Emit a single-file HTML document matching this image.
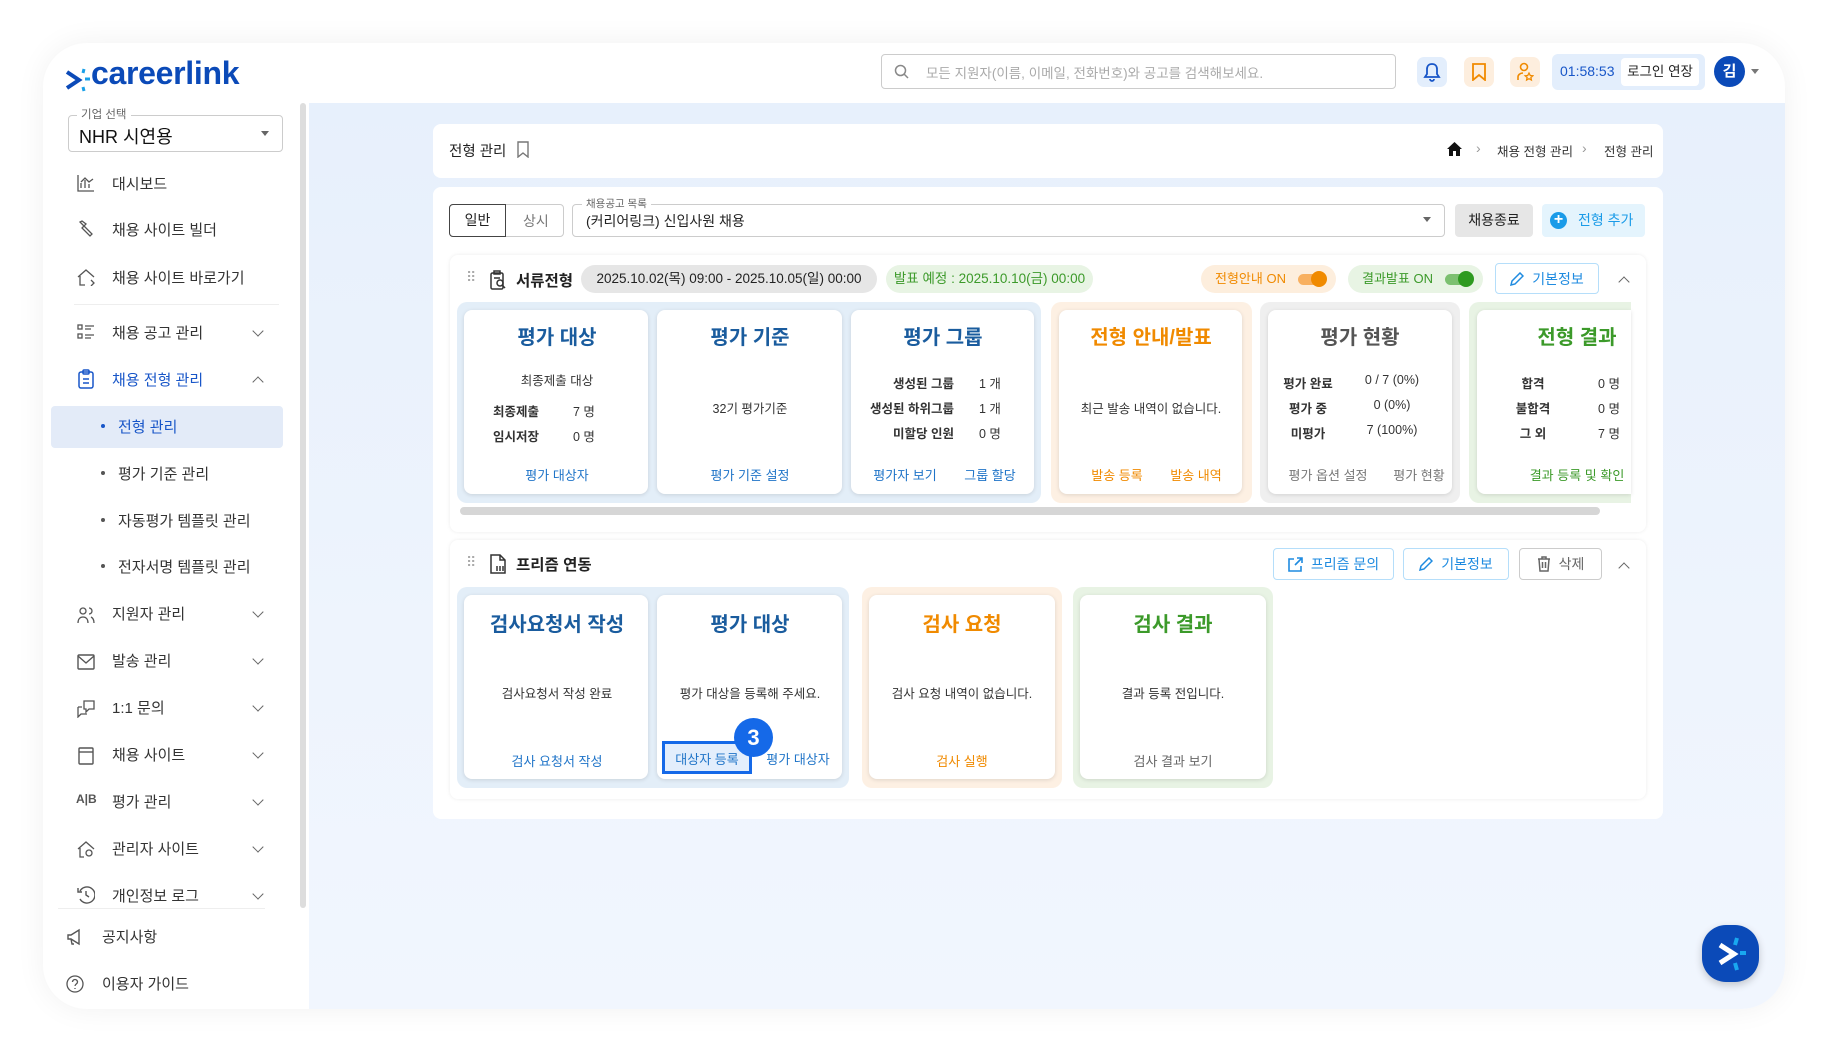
<!DOCTYPE html>
<html><head><meta charset="utf-8"><style>
*{box-sizing:border-box;margin:0;padding:0}
body{width:1825px;height:1048px;background:#fff;font-family:"Liberation Sans","Noto Sans CJK KR",sans-serif;position:relative;overflow:hidden;color:#222}
.a{position:absolute}
.frame{left:43px;top:43px;width:1742px;height:966px;border-radius:44px;background:#fff;box-shadow:0 0 30px rgba(0,0,0,.06);overflow:hidden}
.main{left:266px;top:60px;width:1476px;height:906px;background:linear-gradient(180deg,#e7f0fc,#eef4fd 60%,#f1f6fe)}
.t{white-space:nowrap}
.c{transform:translateX(-50%);white-space:nowrap}
.menu{font-size:15px;color:#333}
.chev{width:8px;height:8px;border-right:1.5px solid #666;border-bottom:1.5px solid #666;transform:rotate(45deg)}
.card{background:#fff;border-radius:8px;box-shadow:0 1px 4px rgba(0,0,0,.12)}
.grp{border-radius:10px}
.tt{font-size:20px;font-weight:bold}
.sm{font-size:12.5px;color:#333}
.b{font-weight:bold}
.lk{font-size:13px;color:#1f74c8}
.btn{border:1px solid #b5defa;border-radius:4px;background:#fff;font-size:14px;color:#1f8be0;display:flex;align-items:center;justify-content:center;gap:8px}
</style></head><body>
<div class="a frame">
 <svg class="a" style="left:22px;top:23px" width="26" height="28" viewBox="0 0 26 28"><path d="M2 6l12 8-12 8" fill="none" stroke="#0b4ab8" stroke-width="4"/><path d="M19 3l-1 4M20 13h5M18 21l1 4" stroke="#19a0e8" stroke-width="3"/></svg>
 <div class="a t" style="left:48px;top:12px;font-size:32px;font-weight:bold;color:#0b4ab8;letter-spacing:-0.3px">careerlink</div>
 <div class="a" style="left:838px;top:11px;width:515px;height:35px;border:1px solid #ccc;border-radius:4px"></div>
 <svg class="a" style="left:851px;top:21px" width="16" height="16" viewBox="0 0 16 16"><circle cx="6.5" cy="6.5" r="5" fill="none" stroke="#888" stroke-width="1.5"/><path d="M10 10l4 4" stroke="#888" stroke-width="1.5"/></svg>
 <div class="a t" style="left:883px;top:19px;font-size:13.5px;color:#aaa">모든 지원자(이름, 이메일, 전화번호)와 공고를 검색해보세요.</div>
 <div class="a" style="left:1374px;top:14px;width:30px;height:30px;border-radius:7px;background:#e3eefc"></div>
 <svg class="a" style="left:1380px;top:19px" width="18" height="20" viewBox="0 0 18 20"><path d="M9 2c-3 0-5 2-5 5v5l-2 3h14l-2-3V7c0-3-2-5-5-5zM7 17a2 2 0 004 0" fill="none" stroke="#1856c8" stroke-width="1.8"/></svg>
 <div class="a" style="left:1421px;top:14px;width:30px;height:30px;border-radius:7px;background:#fdeede"></div>
 <svg class="a" style="left:1428px;top:20px" width="16" height="18" viewBox="0 0 16 18"><path d="M2 1h12v16l-6-5-6 5z" fill="none" stroke="#f08a00" stroke-width="1.8"/></svg>
 <div class="a" style="left:1467px;top:14px;width:30px;height:30px;border-radius:7px;background:#fdeede"></div>
 <svg class="a" style="left:1473px;top:19px" width="18" height="20" viewBox="0 0 18 20"><circle cx="8" cy="5" r="3.5" fill="none" stroke="#f08a00" stroke-width="1.6"/><path d="M2 18v-3c0-2 2-4 5-4" fill="none" stroke="#f08a00" stroke-width="1.6"/><path d="M13 11l1.3 2.5 2.5.3-1.9 1.7.5 2.5-2.4-1.3-2.4 1.3.5-2.5-1.9-1.7 2.5-.3z" fill="none" stroke="#f08a00" stroke-width="1.3"/></svg>
 <div class="a" style="left:1509px;top:11px;width:153px;height:36px;border-radius:6px;background:#e3eefc"></div>
 <div class="a t" style="left:1517px;top:20px;font-size:14px;color:#1856c8">01:58:53</div>
 <div class="a t" style="left:1578px;top:15px;width:78px;height:28px;background:#fff;border-radius:4px;font-size:13.5px;text-align:center;line-height:28px">로그인 연장</div>
 <div class="a" style="left:1671px;top:13px;width:31px;height:31px;border-radius:50%;background:#0b4ab8;color:#fff;font-size:15px;text-align:center;line-height:31px;font-weight:bold">김</div>
 <div class="a" style="left:1708px;top:26px;border:4.5px solid transparent;border-top:5px solid #777"></div>

 <div class="a" style="left:257px;top:60px;width:6px;height:805px;background:#ddd;border-radius:3px"></div>
 <div class="a" style="left:25px;top:72px;width:215px;height:37px;border:1px solid #ccc;border-radius:4px"></div>
 <div class="a t" style="left:34px;top:63px;background:#fff;padding:0 4px;font-size:11.5px;color:#666">기업 선택</div>
 <div class="a t" style="left:36px;top:80px;font-size:18px;color:#111">NHR 시연용</div>
 <div class="a" style="left:218px;top:88px;border:4.5px solid transparent;border-top:5px solid #666"></div>

 <div class="a" style="left:8px;top:363px;width:232px;height:42px;background:#e3ebf8;border-radius:4px"></div>
 <div class="a" style="left:31px;top:261px;width:205px;height:1px;background:#eee"></div>
 <div class="a" style="left:15px;top:865px;width:207px;height:1px;background:#eee"></div>
 <svg class="a" style="left:34px;top:131px" width="18" height="18" viewBox="0 0 18 18" fill="none" stroke="#555" stroke-width="1.3"><path d="M1 1v16h16M4 14V9M8 14V6M12 14v-4M4 8l4-4 4 4 4-3"/></svg>
 <svg class="a" style="left:34px;top:177px" width="18" height="18" viewBox="0 0 18 18" fill="none" stroke="#555" stroke-width="1.3"><path d="M3 2l4 4-2 2 8 8 2-2-8-8 2-2-4-3z"/></svg>
 <svg class="a" style="left:34px;top:225px" width="18" height="18" viewBox="0 0 18 18" fill="none" stroke="#555" stroke-width="1.3"><path d="M1 9l8-7 8 7M3 8v9h5M14 12l3 3-3 3"/></svg>
 <svg class="a" style="left:34px;top:280px" width="18" height="18" viewBox="0 0 18 18" fill="none" stroke="#555" stroke-width="1.3"><rect x="1" y="2" width="4" height="4"/><rect x="1" y="11" width="4" height="4"/><path d="M8 3h9M8 6h6M8 12h9M8 15h6"/></svg>
 <svg class="a" style="left:34px;top:326px" width="18" height="20" viewBox="0 0 18 20" fill="none" stroke="#1856c8" stroke-width="1.5"><rect x="2" y="3" width="14" height="16" rx="2"/><rect x="6" y="1" width="6" height="4" rx="1"/><path d="M6 10h6M6 14h6"/></svg>
 <svg class="a" style="left:34px;top:563px" width="18" height="18" viewBox="0 0 18 18" fill="none" stroke="#555" stroke-width="1.3"><circle cx="6" cy="5" r="3"/><path d="M1 17c0-4 2-6 5-6s5 2 5 6M12 2a3 3 0 010 6M14 11c2 1 3 3 3 6"/></svg>
 <svg class="a" style="left:34px;top:610px" width="18" height="18" viewBox="0 0 18 18" fill="none" stroke="#555" stroke-width="1.4"><rect x="1" y="2" width="16" height="14" rx="1"/><path d="M1 3l8 7 8-7"/></svg>
 <svg class="a" style="left:34px;top:657px" width="18" height="18" viewBox="0 0 18 18" fill="none" stroke="#555" stroke-width="1.3"><path d="M7 1h10v8h-5l-3 3V9H7zM1 7h4M1 7v10l3-3h6"/></svg>
 <svg class="a" style="left:34px;top:704px" width="18" height="18" viewBox="0 0 18 18" fill="none" stroke="#555" stroke-width="1.4"><rect x="2" y="1" width="14" height="16" rx="1"/><path d="M2 5h14"/></svg>
 <div class="a t" style="left:33px;top:749px;font-size:12px;color:#555;font-weight:bold">A|B</div>
 <svg class="a" style="left:34px;top:797px" width="18" height="18" viewBox="0 0 18 18" fill="none" stroke="#555" stroke-width="1.3"><path d="M1 9l8-7 8 7M3 8v9h4"/><circle cx="12" cy="13" r="3"/></svg>
 <svg class="a" style="left:34px;top:843px" width="18" height="18" viewBox="0 0 18 18" fill="none" stroke="#555" stroke-width="1.4"><path d="M3 5a8 8 0 110 8M1 2v4h4M9 5v4l3 2"/></svg>
 <svg class="a" style="left:23px;top:885px" width="18" height="18" viewBox="0 0 18 18" fill="none" stroke="#555" stroke-width="1.4"><path d="M2 7h3l8-5v14l-8-5H2zM5 11l1 5h2"/></svg>
 <svg class="a" style="left:23px;top:932px" width="18" height="18" viewBox="0 0 18 18" fill="none" stroke="#555" stroke-width="1.3"><circle cx="9" cy="9" r="8"/><path d="M6.5 7a2.5 2.5 0 115 0c0 2-2.5 2-2.5 4M9 13v1"/></svg>

 <div class="a t menu" style="left:69px;top:130px">대시보드</div>
 <div class="a t menu" style="left:69px;top:176px">채용 사이트 빌더</div>
 <div class="a t menu" style="left:69px;top:224px">채용 사이트 바로가기</div>
 <div class="a t menu" style="left:69px;top:279px">채용 공고 관리</div>
 <div class="a t menu" style="left:69px;top:326px;color:#1856c8">채용 전형 관리</div>
 <div class="a" style="left:58px;top:381px;width:4px;height:4px;border-radius:50%;background:#1856c8"></div>
 <div class="a t menu" style="left:75px;top:373px;color:#1856c8">전형 관리</div>
 <div class="a" style="left:58px;top:428px;width:4px;height:4px;border-radius:50%;background:#555"></div>
 <div class="a t menu" style="left:75px;top:420px">평가 기준 관리</div>
 <div class="a" style="left:58px;top:475px;width:4px;height:4px;border-radius:50%;background:#555"></div>
 <div class="a t menu" style="left:75px;top:467px">자동평가 템플릿 관리</div>
 <div class="a" style="left:58px;top:521px;width:4px;height:4px;border-radius:50%;background:#555"></div>
 <div class="a t menu" style="left:75px;top:513px">전자서명 템플릿 관리</div>
 <div class="a t menu" style="left:69px;top:560px">지원자 관리</div>
 <div class="a t menu" style="left:69px;top:607px">발송 관리</div>
 <div class="a t menu" style="left:69px;top:654px">1:1 문의</div>
 <div class="a t menu" style="left:69px;top:701px">채용 사이트</div>
 <div class="a t menu" style="left:69px;top:748px">평가 관리</div>
 <div class="a t menu" style="left:69px;top:795px">관리자 사이트</div>
 <div class="a t menu" style="left:69px;top:842px">개인정보 로그</div>
 <div class="a t menu" style="left:59px;top:883px">공지사항</div>
 <div class="a t menu" style="left:59px;top:930px">이용자 가이드</div>
 <div class="a chev" style="left:211px;top:284px"></div>
 <div class="a chev" style="left:211px;top:335px;transform:rotate(225deg)"></div>
 <div class="a chev" style="left:211px;top:565px"></div>
 <div class="a chev" style="left:211px;top:612px"></div>
 <div class="a chev" style="left:211px;top:659px"></div>
 <div class="a chev" style="left:211px;top:706px"></div>
 <div class="a chev" style="left:211px;top:753px"></div>
 <div class="a chev" style="left:211px;top:800px"></div>
 <div class="a chev" style="left:211px;top:847px"></div>

 <div class="a main"></div>
 <div class="a" style="left:390px;top:81px;width:1230px;height:54px;background:#fff;border-radius:8px"></div>
 <div class="a t" style="left:406px;top:97px;font-size:14.5px">전형 관리</div>
 <svg class="a" style="left:473px;top:98px" width="14" height="17" viewBox="0 0 14 17"><path d="M2 1h10v15l-5-4-5 4z" fill="none" stroke="#777" stroke-width="1.4"/></svg>
 <svg class="a" style="left:1404px;top:99px" width="15" height="14" viewBox="0 0 15 14"><path d="M7.5 0L0 7h2v7h4V9h3v5h4V7h2z" fill="#111"/></svg>
 <div class="a t" style="left:1433px;top:97px;font-size:14px;color:#999">›</div>
 <div class="a t" style="left:1454px;top:98px;font-size:12.5px;color:#333">채용 전형 관리</div>
 <div class="a t" style="left:1539px;top:97px;font-size:14px;color:#999">›</div>
 <div class="a t" style="left:1561px;top:98px;font-size:12.5px;color:#333">전형 관리</div>

 <div class="a" style="left:390px;top:144px;width:1230px;height:632px;background:#fff;border-radius:8px"></div>
 <div class="a" style="left:406px;top:161px;width:115px;height:33px;border:1px solid #ccc;border-radius:4px"></div>
 <div class="a" style="left:406px;top:161px;width:57px;height:33px;border:1px solid #444;border-radius:4px 0 0 4px;font-size:14px;text-align:center;line-height:31px">일반</div>
 <div class="a t" style="left:480px;top:168px;font-size:14px;color:#777">상시</div>
 <div class="a" style="left:529px;top:161px;width:873px;height:33px;border:1px solid #ccc;border-radius:4px"></div>
 <div class="a t" style="left:539px;top:153px;background:#fff;padding:0 4px;font-size:10.5px;color:#666">채용공고 목록</div>
 <div class="a t" style="left:543px;top:168px;font-size:14px">(커리어링크) 신입사원 채용</div>
 <div class="a" style="left:1380px;top:174px;border:4px solid transparent;border-top:5px solid #666"></div>
 <div class="a" style="left:1412px;top:161px;width:78px;height:33px;background:#e6e6e6;border-radius:4px;font-size:14px;text-align:center;line-height:33px">채용종료</div>
 <div class="a" style="left:1499px;top:161px;width:103px;height:33px;background:#e4f4fd;border-radius:4px;font-size:14px;color:#1a9be8;line-height:33px;padding-left:36px">전형 추가</div>
 <div class="a" style="left:1507px;top:169px;width:17px;height:17px;border-radius:50%;background:#1a9be8;color:#fff;font-size:16px;line-height:16px;text-align:center;font-weight:bold">+</div>

 <div class="a card" style="left:407px;top:212px;width:1196px;height:277px;box-shadow:0 0 4px rgba(0,0,0,.08)"></div>
 <div class="a t" style="left:423px;top:226px;font-size:14px;color:#aaa;letter-spacing:-2px">⠿</div>
 <svg class="a" style="left:446px;top:227px" width="18" height="20" viewBox="0 0 18 20" fill="none" stroke="#333" stroke-width="1.5"><rect x="2" y="3" width="12" height="16" rx="1.5"/><rect x="5" y="1" width="6" height="3"/><circle cx="11" cy="13" r="3"/><path d="M13 15l3 3M5 8h6"/></svg>
 <div class="a t b" style="left:473px;top:226px;font-size:15.5px">서류전형</div>
 <div class="a" style="left:538px;top:222px;width:296px;height:28px;border-radius:14px;background:#e6e6e6;font-size:13.5px;text-align:center;line-height:28px">2025.10.02(목) 09:00 - 2025.10.05(일) 00:00</div>
 <div class="a" style="left:843px;top:222px;width:207px;height:28px;border-radius:14px;background:#e8f4e4;color:#3c9a2a;font-size:13.5px;text-align:center;line-height:28px">발표 예정 : 2025.10.10(금) 00:00</div>
 <div class="a" style="left:1158px;top:222px;width:135px;height:28px;border-radius:14px;background:#fdeedd;color:#f08a00;font-size:13px;line-height:28px;padding-left:14px">전형안내 ON</div>
 <div class="a" style="left:1255px;top:231px;width:27px;height:11px;border-radius:6px;background:#f8b060"></div>
 <div class="a" style="left:1268px;top:228px;width:16px;height:16px;border-radius:50%;background:#f08a00"></div>
 <div class="a" style="left:1305px;top:222px;width:135px;height:28px;border-radius:14px;background:#e8f4e4;color:#3c9a2a;font-size:13px;line-height:28px;padding-left:14px">결과발표 ON</div>
 <div class="a" style="left:1402px;top:231px;width:27px;height:11px;border-radius:6px;background:#7cc070"></div>
 <div class="a" style="left:1415px;top:228px;width:16px;height:16px;border-radius:50%;background:#2e9a20"></div>
 <div class="a btn" style="left:1452px;top:220px;width:104px;height:31px"><svg width="14" height="14" viewBox="0 0 14 14" fill="none" stroke="#1f8be0" stroke-width="1.5"><path d="M1 13l1-4 8-8 3 3-8 8z"/></svg>기본정보</div>
 <div class="a chev" style="left:1577px;top:235px;transform:rotate(225deg);border-color:#666"></div>

 <div class="a grp" style="left:414px;top:259px;width:584px;height:201px;background:#e3eef8"></div>
 <div class="a grp" style="left:1008px;top:259px;width:201px;height:201px;background:#fdf0e3"></div>
 <div class="a grp" style="left:1217px;top:259px;width:200px;height:201px;background:#efefef"></div>
 <div class="a grp" style="left:1426px;top:259px;width:162px;height:201px;background:#e8f3e4;border-radius:10px 0 0 10px"></div>
 <div class="a card" style="left:421px;top:267px;width:184px;height:184px"></div>
 <div class="a card" style="left:614px;top:267px;width:185px;height:184px"></div>
 <div class="a card" style="left:808px;top:267px;width:183px;height:184px"></div>
 <div class="a card" style="left:1016px;top:267px;width:183px;height:184px"></div>
 <div class="a card" style="left:1225px;top:267px;width:184px;height:184px"></div>
 <div class="a card" style="left:1434px;top:267px;width:154px;height:184px;border-radius:8px 0 0 8px"></div>
 <div class="a" style="left:417px;top:464px;width:1140px;height:8px;border-radius:4px;background:#d6d6d6"></div>

 <div class="a c tt" style="left:514px;top:278px;color:#1a5c9e">평가 대상</div>
 <div class="a c sm" style="left:514px;top:327px">최종제출 대상</div>
 <div class="a t sm b" style="left:450px;top:358px">최종제출</div><div class="a t sm" style="left:530px;top:358px">7 명</div>
 <div class="a t sm b" style="left:450px;top:383px">임시저장</div><div class="a t sm" style="left:530px;top:383px">0 명</div>
 <div class="a c lk" style="left:514px;top:422px">평가 대상자</div>

 <div class="a c tt" style="left:707px;top:278px;color:#1a5c9e">평가 기준</div>
 <div class="a c sm" style="left:707px;top:355px">32기 평가기준</div>
 <div class="a c lk" style="left:707px;top:422px">평가 기준 설정</div>

 <div class="a c tt" style="left:900px;top:278px;color:#1a5c9e">평가 그룹</div>
 <div class="a t sm b" style="left:831px;top:330px;width:80px;text-align:right">생성된 그룹</div><div class="a t sm" style="left:936px;top:330px">1 개</div>
 <div class="a t sm b" style="left:811px;top:355px;width:100px;text-align:right">생성된 하위그룹</div><div class="a t sm" style="left:936px;top:355px">1 개</div>
 <div class="a t sm b" style="left:831px;top:380px;width:80px;text-align:right">미할당 인원</div><div class="a t sm" style="left:936px;top:380px">0 명</div>
 <div class="a c lk" style="left:862px;top:422px">평가자 보기</div><div class="a c lk" style="left:947px;top:422px">그룹 할당</div>

 <div class="a c tt" style="left:1108px;top:278px;color:#f08a00">전형 안내/발표</div>
 <div class="a c sm" style="left:1108px;top:355px">최근 발송 내역이 없습니다.</div>
 <div class="a c lk" style="left:1074px;top:422px;color:#f08a00">발송 등록</div><div class="a c lk" style="left:1153px;top:422px;color:#f08a00">발송 내역</div>

 <div class="a c tt" style="left:1317px;top:278px;color:#555">평가 현황</div>
 <div class="a c sm b" style="left:1265px;top:330px">평가 완료</div><div class="a c sm" style="left:1349px;top:330px">0 / 7 (0%)</div>
 <div class="a c sm b" style="left:1265px;top:355px">평가 중</div><div class="a c sm" style="left:1349px;top:355px">0 (0%)</div>
 <div class="a c sm b" style="left:1265px;top:380px">미평가</div><div class="a c sm" style="left:1349px;top:380px">7 (100%)</div>
 <div class="a c lk" style="left:1285px;top:422px;color:#777">평가 옵션 설정</div><div class="a c lk" style="left:1376px;top:422px;color:#777">평가 현황</div>

 <div class="a c tt" style="left:1534px;top:278px;color:#3c9a2a">전형 결과</div>
 <div class="a c sm b" style="left:1490px;top:330px">합격</div><div class="a c sm" style="left:1566px;top:330px">0 명</div>
 <div class="a c sm b" style="left:1490px;top:355px">불합격</div><div class="a c sm" style="left:1566px;top:355px">0 명</div>
 <div class="a c sm b" style="left:1490px;top:380px">그 외</div><div class="a c sm" style="left:1566px;top:380px">7 명</div>
 <div class="a c lk" style="left:1534px;top:422px;color:#3c9a2a">결과 등록 및 확인</div>

 <div class="a card" style="left:407px;top:497px;width:1196px;height:259px;box-shadow:0 0 4px rgba(0,0,0,.08)"></div>
 <div class="a t" style="left:423px;top:511px;font-size:14px;color:#aaa;letter-spacing:-2px">⠿</div>
 <svg class="a" style="left:446px;top:511px" width="18" height="20" viewBox="0 0 18 20" fill="none" stroke="#333" stroke-width="1.5"><path d="M2 1h9l5 5v13H2z"/><path d="M11 1v5h5M8 12v5M11 12v5M14 12v5"/></svg>
 <div class="a t b" style="left:473px;top:510px;font-size:15.5px">프리즘 연동</div>
 <div class="a btn" style="left:1230px;top:505px;width:121px;height:32px"><svg width="15" height="15" viewBox="0 0 15 15" fill="none" stroke="#1f8be0" stroke-width="1.6"><path d="M6 2H1v12h12V9M9 1h5v5M14 1L7 8"/></svg>프리즘 문의</div>
 <div class="a btn" style="left:1360px;top:505px;width:106px;height:32px"><svg width="14" height="14" viewBox="0 0 14 14" fill="none" stroke="#1f8be0" stroke-width="1.5"><path d="M1 13l1-4 8-8 3 3-8 8z"/></svg>기본정보</div>
 <div class="a btn" style="left:1476px;top:505px;width:83px;height:32px;border-color:#ccc;color:#666"><svg width="14" height="16" viewBox="0 0 14 16" fill="none" stroke="#666" stroke-width="1.5"><path d="M1 3h12M5 3V1h4v2M2 3l1 12h8l1-12M5.5 6v6M8.5 6v6"/></svg>삭제</div>
 <div class="a chev" style="left:1577px;top:521px;transform:rotate(225deg);border-color:#666"></div>

 <div class="a grp" style="left:414px;top:544px;width:392px;height:201px;background:#e3eef8"></div>
 <div class="a grp" style="left:819px;top:544px;width:200px;height:201px;background:#fdf0e3"></div>
 <div class="a grp" style="left:1030px;top:544px;width:200px;height:201px;background:#e8f3e4"></div>
 <div class="a card" style="left:421px;top:552px;width:184px;height:184px"></div>
 <div class="a card" style="left:614px;top:552px;width:185px;height:184px"></div>
 <div class="a card" style="left:826px;top:552px;width:186px;height:184px"></div>
 <div class="a card" style="left:1037px;top:552px;width:186px;height:184px"></div>

 <div class="a c tt" style="left:514px;top:565px;color:#1a5c9e">검사요청서 작성</div>
 <div class="a c sm" style="left:514px;top:640px">검사요청서 작성 완료</div>
 <div class="a c lk" style="left:514px;top:708px">검사 요청서 작성</div>

 <div class="a c tt" style="left:707px;top:565px;color:#1a5c9e">평가 대상</div>
 <div class="a c sm" style="left:707px;top:640px">평가 대상을 등록해 주세요.</div>
 <div class="a" style="left:619px;top:698px;width:90px;height:33px;border:3px solid #1569e8;background:#e3eefc"></div>
 <div class="a c lk" style="left:664px;top:706px">대상자 등록</div>
 <div class="a c lk" style="left:755px;top:706px">평가 대상자</div>
 <div class="a" style="left:691px;top:675px;width:39px;height:39px;border-radius:50%;background:#1569e8;color:#fff;font-size:22px;font-weight:bold;text-align:center;line-height:39px">3</div>

 <div class="a c tt" style="left:919px;top:565px;color:#f08a00">검사 요청</div>
 <div class="a c sm" style="left:919px;top:640px">검사 요청 내역이 없습니다.</div>
 <div class="a c lk" style="left:919px;top:708px;color:#f08a00">검사 실행</div>

 <div class="a c tt" style="left:1130px;top:565px;color:#3c9a2a">검사 결과</div>
 <div class="a c sm" style="left:1130px;top:640px">결과 등록 전입니다.</div>
 <div class="a c lk" style="left:1130px;top:708px;color:#666">검사 결과 보기</div>
</div>

<div class="a" style="left:1702px;top:925px;width:57px;height:57px;border-radius:24px;background:#0b4ab8;box-shadow:0 3px 8px rgba(0,0,0,.2)"></div>
<svg class="a" style="left:1702px;top:925px" width="57" height="57" viewBox="0 0 57 57"><path d="M18 20l14 9-14 9" fill="none" stroke="#fff" stroke-width="5"/><path d="M35 13l-2 7M38 28h6M33 38l2 7" stroke="#19a8f0" stroke-width="4"/></svg>
</body></html>
